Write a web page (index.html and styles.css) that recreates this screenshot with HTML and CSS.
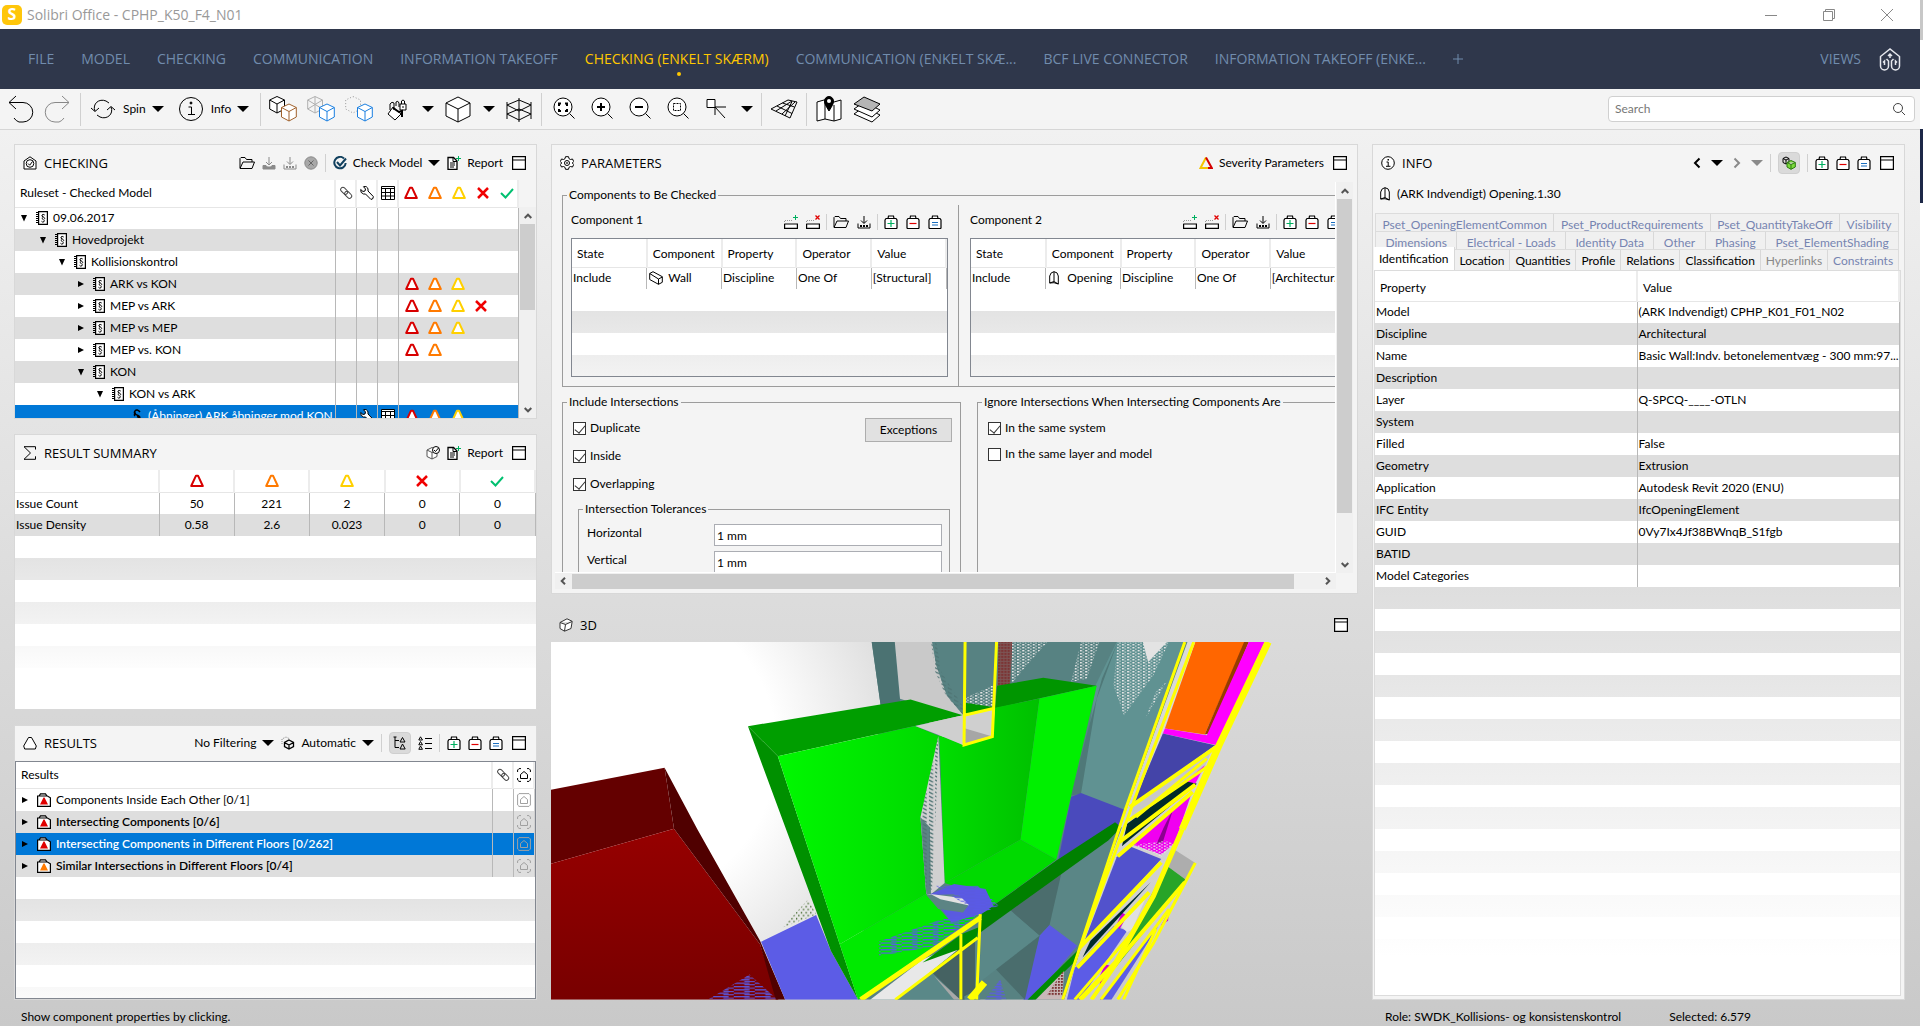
FILE: index.html
```html
<!DOCTYPE html>
<html lang="en">
<head>
<meta charset="utf-8">
<title>Solibri Office - CPHP_K50_F4_N01</title>
<link rel="stylesheet" href="styles.css">
</head>
<body>
<svg class="sprite" aria-hidden="true">
  <symbol id="i-undo" viewBox="0 0 28 28"><path d="M10 1 3 7.500 10 14M3 7.500h14a9.500 9.500 0 0 1 0 19.500h-4q-3-1-5-4"/></symbol>
  <symbol id="i-redo" viewBox="0 0 28 28"><path d="M18 1l7 6.500-7 6.500M25 7.500H11a9.500 9.500 0 0 0 0 19.500h4q3-1 5-4"/></symbol>
  <symbol id="i-spin" viewBox="0 0 28 28"><path d="M6 16C3 9 10 3 17 6l3 2M22 12c3 7-4 13-11 10l-3-2M2 13l4 3.500L10 13M18 15l4-3.500 4 3.500"/></symbol>
  <symbol id="i-info" viewBox="0 0 28 28"><circle cx="14" cy="14" r="11.500"/><path d="M11.500 12H14.500v7M11 19.500h7"/><circle cx="14" cy="8" r="1" fill="currentColor"/></symbol>
  <symbol id="i-infos" viewBox="0 0 14 14"><circle cx="7" cy="7" r="6.300" fill="#fff"/><path d="M5.500 6H7.200v4M5 10.300h4.500"/><path stroke-width="1.500" d="M6.500 3.700h1.500"/></symbol>
  <symbol id="i-cube" viewBox="0 0 28 28"><path fill="#fff" d="M14 2 26 8v13L14 27 2 21V8Z"/><path d="M2 8l12 6 12-6M14 14v13"/></symbol>
  <symbol id="i-cubes1" viewBox="0 0 28 28"><path fill="#fff" d="M8 1.500 15.500 5v9L8 18 .7 14V5Z"/><path d="M.7 5 8 9l7.500-4M8 9v9"/><g stroke="#a0612c"><path fill="#fff" d="M20 9l7.300 3.500v9.500L20 26l-7.500-4v-9.500Z"/><path d="m12.500 12.500 7.500 4 7.300-4M20 16.500V26"/></g></symbol>
  <symbol id="i-cubes2" viewBox="0 0 28 28"><g stroke="#b0b0b0"><path d="M8 1.500 15.500 5v9L8 18 .7 14V5ZM.7 5l15 9M15.500 5 .7 14M8 1.500V18"/></g><g stroke="#1a7fe0"><path fill="#fff" d="M20 9l7.300 3.500v9.500L20 26l-7.500-4v-9.500Z"/><path d="m12.500 12.500 7.500 4 7.300-4M20 16.500V26"/></g></symbol>
  <symbol id="i-cubes3" viewBox="0 0 28 28"><g stroke="#999" stroke-dasharray="1 2"><path d="M8 1.500 15.500 5v9L8 18 .7 14V5Z"/></g><g stroke="#1a7fe0"><path fill="#fff" d="M20 9l7.300 3.500v9.500L20 26l-7.500-4v-9.500Z"/><path d="m12.500 12.500 7.500 4 7.300-4M20 16.500V26"/></g></symbol>
  <symbol id="i-paint" viewBox="0 0 28 28"><path fill="#fff" d="M10 12l8 7-6 6-7-6Z"/><path d="M7 15V9q2-3 4-1v7M13 11V7q2-2 3 1v4"/><path fill="#fff" d="M17 9h6v6h-6ZM18.500 9V6q1.500-2 3 0v3M20 11v2"/><path stroke-width="2" d="M10 13l6 4 3-1v6"/></symbol>
  <symbol id="i-section" viewBox="0 0 28 28"><path d="M2 7v17M26 7v17M2 10l12 6 12-6M2 19l12 6 12-6M2 10l12-5 12 5M2 19l12-5 12 5M14 3v24"/></symbol>
  <symbol id="i-zall" viewBox="0 0 28 28"><path fill="#fff" d="M13 3a9 9 0 1 1 0 18a9 9 0 1 1 0-18"/><path d="m19.500 18.500 5 5"/><path stroke-width="2" d="M9 11V8.500h2M15 8.500h2V11M17 14v2h-2M11 16H9v-2"/></symbol>
  <symbol id="i-zin" viewBox="0 0 28 28"><path fill="#fff" d="M13 3a9 9 0 1 1 0 18a9 9 0 1 1 0-18"/><path d="m19.500 18.500 5 5"/><path stroke-width="2" d="M9 12h8M13 8v8"/></symbol>
  <symbol id="i-zout" viewBox="0 0 28 28"><path fill="#fff" d="M13 3a9 9 0 1 1 0 18a9 9 0 1 1 0-18"/><path d="m19.500 18.500 5 5"/><path stroke-width="2" d="M9 12h8"/></symbol>
  <symbol id="i-zbox" viewBox="0 0 28 28"><path fill="#fff" d="M13 3a9 9 0 1 1 0 18a9 9 0 1 1 0-18"/><path d="m19.500 18.500 5 5"/><path stroke-dasharray="2 1" d="M9.500 8.500h7v7h-7Z"/></symbol>
  <symbol id="i-pick" viewBox="0 0 28 28"><path fill="#fff" d="M5 4.500h8v8H5Z"/><path d="M13 20v-8h11M13 12l10 11"/></symbol>
  <symbol id="i-grid" viewBox="0 0 28 28"><path d="M1 14 18 5l9 2-7 16ZM7 11l15 7.500M12.500 8l12 4M6 16l16-10M12 19 25 7M22 6.500 15 21"/></symbol>
  <symbol id="i-map" viewBox="0 0 28 28"><path fill="#fff" d="M2 7l7-2 10 2 7-2v19l-7 2-9-2-8 2Z"/><path d="M10 7v17M19 10v16"/><path fill="currentColor" d="M14 16c-3-5-4.500-7-4.500-10a4.500 4.500 0 0 1 9 0c0 3-1.500 5-4.500 10Z"/><circle cx="14" cy="6" r="2" fill="#fff" stroke="none"/></symbol>
  <symbol id="i-layers" viewBox="0 0 28 28"><g fill="#fff"><path d="m11 12 16 8-8 7-18-8Z"/><path d="m11 7 16 8-8 7-18-8Z"/><path fill="#b5b5b5" d="m11 2 16 7-8 7L1 9Z"/></g></symbol>
  <symbol id="i-logo" viewBox="0 0 24 24"><path stroke-width="1.500" d="M2.500 19V9.500L12 2l9.500 7.500V19a4 4 0 0 1-8 0v-5l2-2M2.500 19a4 4 0 0 0 8 0v-5l-2-2M12 11V7M10 9l2-2 2 2M6.500 18v-4l-1.500 1.500M17.500 18v-4l1.500 1.500"/></symbol>
  <symbol id="i-search" viewBox="0 0 14 14"><circle cx="6" cy="6" r="4.500"/><path d="m9.500 9.500 3.500 3.500"/></symbol>
  <symbol id="i-caret" viewBox="0 0 12 6"><path fill="currentColor" stroke="none" d="M0 0h12L6 6Z"/></symbol>
  <symbol id="i-max" viewBox="0 0 14 14"><path fill="#fff" stroke-width="1.200" d="M.6.6h12.800v12.800H.6ZM.6 4h12.800"/></symbol>
  <symbol id="i-checking" viewBox="0 0 14 14"><path fill="#fff" d="M1 5 7 .8 13 5v8H1Z"/><circle cx="7" cy="7.500" r="3.800"/><path d="m5 7.500 1.700 1.700L9.500 5.500"/></symbol>
  <symbol id="i-folder" viewBox="0 0 16 14"><path d="M1 12V2.500L2 1.500h4l1.500 2H13V6M1 12.500 4 6h11.500L13 12.500Z"/></symbol>
  <symbol id="i-down" viewBox="0 0 14 14"><path d="M7 1v8M4 6l3 3 3-3"/><path fill="currentColor" d="M1 9.500h3l1.500 1.500h3L10 9.500h3v3.500H1Z"/></symbol>
  <symbol id="i-save" viewBox="0 0 14 14"><path d="M7 1v7M4 5.500l3 3 3-3M1 8.500v4.500h12V8.500"/><path stroke-width="2" stroke-dasharray="2 1" d="M3 11h8"/></symbol>
  <symbol id="i-stop" viewBox="0 0 14 14"><circle cx="7" cy="7" r="6.200" fill="#a8a8a8"/><path stroke="#666" d="m4.500 4.500 5 5M9.500 4.500l-5 5"/></symbol>
  <symbol id="i-docheck" viewBox="0 0 14 14"><path stroke="#11405e" stroke-width="2" d="M11 2.500A5.700 5.700 0 1 0 12.700 7M4 6l3 3.500 6-7"/></symbol>
  <symbol id="i-report" viewBox="0 0 14 14"><path fill="#fff" stroke-width="1.300" d="M1 1.500h5.500L10 5v8.300H1Z"/><path d="M6 2v3.500h4M3 7h5M3 9h5M3 11h4"/><path stroke="#00b060" d="M11.500 0v5M9 2.500h5"/></symbol>
  <symbol id="i-book" viewBox="0 0 12 14"><path fill="#fff" stroke-width="1.200" d="M2.600.6h8.800v12.800H2.600Z"/><path stroke-dasharray="1 1" stroke-width="3" d="M1.500 1v12"/><path d="M8.700 4Q7 2.800 6 4T8 6.300q1.300 1 .2 2M6.500 6.500Q5 7 7 8.300T8 10.700q-1.500 1-2.500-.4"/></symbol>
  <symbol id="i-rule" viewBox="0 0 12 14"><path stroke-width="1.500" d="M9 3Q6-.5 4 2t3 4.500q3 1.500 1 3M4 7Q2.500 5 5 4M3.500 11q3 3 5 .5T6 7.500"/></symbol>
  <symbol id="i-link" viewBox="0 0 14 14"><g stroke="#444"><rect x="1" y="2.500" width="8" height="4.500" rx="2.200" transform="rotate(45 5 5)"/><rect x="5" y="6.500" width="8" height="4.500" rx="2.200" transform="rotate(45 9 9)"/></g></symbol>
  <symbol id="i-wrench" viewBox="0 0 14 14"><path fill="#fff" d="M.7 3.500 3 5.500l2-.5.500-2L3.500.7Q7-.3 8 3v2l5.300 5.500q.5 2.500-2.300 3L5.500 8H3.500Q.2 7 .7 3.500Z"/></symbol>
  <symbol id="i-table" viewBox="0 0 14 14"><path fill="#fff" d="M.5.5h13v13H.5Z"/><path d="M1 2.500h12M1 6.500h12M1 10h12M4.500 3v10M9.500 3v10"/></symbol>
  <symbol id="i-tri" viewBox="0 0 14 14"><path fill="#fff" stroke-width="2" stroke-linejoin="round" d="M6 1.700h2l4.800 10.300H1.200Z"/></symbol>
  <symbol id="i-sev" viewBox="0 0 14 14"><path stroke="#f4c400" stroke-width="2" d="M7 1.500 1.500 12H10"/><path stroke="#d40000" stroke-width="2" d="M7 1.500 12.800 12H9"/></symbol>
  <symbol id="i-results" viewBox="0 0 14 14"><path fill="#fff" stroke-linejoin="round" d="M5.500 1.500h3l4.800 8.500-1 3H1.700l-1-3Z"/></symbol>
  <symbol id="i-x" viewBox="0 0 14 14"><path stroke="#f00000" stroke-width="2.500" d="m2 2 10 10M12 2 2 12"/></symbol>
  <symbol id="i-ok" viewBox="0 0 14 14"><path stroke="#00c070" stroke-width="2" d="m1 7 4.500 4.500L13 3"/></symbol>
  <symbol id="i-sigma" viewBox="0 0 14 14"><path d="M12.500 3.500V.7H1L7.500 7 1 13.300h11.500v-3"/></symbol>
  <symbol id="i-cubecheck" viewBox="0 0 14 14"><path fill="#fff" stroke="#555" d="M1 4 6 1.500 11 4v6.500L6 13 1 10.500ZM1 4l5 2.500L10 5M6 6.500V13"/><circle cx="10" cy="4" r="3.500" fill="#fff"/><path d="m8 4 1.500 1.500L12.500 2"/></symbol>
  <symbol id="i-auto" viewBox="0 0 14 14"><path stroke="#888" stroke-dasharray="1 1" d="M1 8V3l4-2 4 2"/><path stroke-width="1.300" d="M8 4l4.500 2.500v4L8 13l-4.500-2.500v-4ZM3.500 6.500 8 9l4.500-2.500M8 9v4"/></symbol>
  <symbol id="i-tree" viewBox="0 0 14 14"><path d="M2 1v10.500h4M2 4.500h4M.5 1h3M9.500 1.500 12 6H7ZM9.500 8l2.700 5H7Z"/></symbol>
  <symbol id="i-list" viewBox="0 0 14 14"><path d="M2.500.8 4.500 4H.8ZM2.500 5.500l2 3.300H.8ZM2.500 10l2 3.300H.8ZM7 2.500h7M7 7.500h7M7 12.500h7"/></symbol>
  <symbol id="i-bagadd" viewBox="0 0 14 14"><path fill="#fff" stroke-width="1.200" d="M4 3.500 4.500 1h5L10 3.500M1 5l1-1.500h10L13 5v8l-.5.500h-11L1 13Z"/><path stroke="#00b060" stroke-width="1.200" d="M3.500 8.500h7M7 5v7"/></symbol>
  <symbol id="i-bagdel" viewBox="0 0 14 14"><path fill="#fff" stroke-width="1.200" d="M4 3.500 4.500 1h5L10 3.500M1 5l1-1.500h10L13 5v8l-.5.500h-11L1 13Z"/><path stroke="#e00000" stroke-width="1.200" d="M3.500 8.500h7"/></symbol>
  <symbol id="i-bageq" viewBox="0 0 14 14"><path fill="#fff" stroke-width="1.200" d="M4 3.500 4.500 1h5L10 3.500M1 5l1-1.500h10L13 5v8l-.5.500h-11L1 13Z"/><path stroke="#1a6fc0" stroke-width="1.200" d="M4 7.500h6M4 10h6"/></symbol>
  <symbol id="i-case" viewBox="0 0 14 14"><path fill="#fff" stroke-width="1.200" d="M2 3 3.500.8h5L10 3M.6 3h9.800l3 1.800v8.600H.6Z"/><path stroke="none" fill="var(--sev)" d="M6.500 4.500h1L11 11.500H3Z"/></symbol>
  <symbol id="i-frame" viewBox="0 0 14 14"><path d="M4 .6H2L.6 2v2M10 .6h2L13.400 2v2M4 13.400H2L.6 12v-2M10 13.400h2l1.400-1.400v-2M3.500 6.500 7 3.500l3.500 3v4h-7Z"/></symbol>
  <symbol id="i-framebox" viewBox="0 0 14 14"><path d="M2 .6h10L13.400 2v10L12 13.400H2L.6 12V2ZM3.500 6.500 7 3.500l3.500 3v4h-7Z"/></symbol>
  <symbol id="i-gear" viewBox="0 0 14 14"><path fill="#fff" stroke-linejoin="round" d="M5.500.7h3l.5 2 1.500.8 2-.5 1.200 2.500L12.300 7l1.400 1.500-1.200 2.500-2-.5-1.500.8-.5 2h-3l-.5-2-1.500-.8-2 .5L.3 8.500 1.700 7 .3 5.500 1.500 3l2 .5L5 2.700Z"/><circle cx="7" cy="7" r="2.500"/><circle cx="7" cy="7" r=".5"/></symbol>
  <symbol id="i-rowadd" viewBox="0 0 14 14"><path fill="#fff" stroke-width="1.200" d="M.6 9h12.800v4.400H.6Z"/><path stroke="#999" stroke-dasharray="1 1" d="M.5 9V5.500H9"/><path stroke="#00b060" d="M11.500 0v5M9 2.500h5"/></symbol>
  <symbol id="i-rowdel" viewBox="0 0 14 14"><path fill="#fff" stroke-width="1.200" d="M.6 9h12.800v4.400H.6Z"/><path stroke="#999" stroke-dasharray="1 1" d="M.5 9V5.500H9"/><path stroke="#e00000" stroke-width="1.300" d="m9.500.5 4 4M13.500.5l-4 4"/></symbol>
  <symbol id="i-wall" viewBox="0 0 14 14"><path fill="#fff" d="M.7 2.500 4 .7l9.300 5v5.600L9.500 13.300.7 8.500Z"/><path d="M.7 2.500 9.500 8l3.800-2M9.500 8v5.300"/></symbol>
  <symbol id="i-open" viewBox="0 0 14 14"><path fill="#fff" d="M1.700 12V5Q2.500 1 6 .7q4 .3 4.300 4.300v8L6 11.700Z"/><path d="M6 .7v9.800l4.300 2.500M1.700 12 6 10.500"/></symbol>
  <symbol id="i-3d" viewBox="0 0 14 14"><path fill="#fff" stroke="#333" d="M1 4.500 8 .8l5.200 2.500L12 10.500 5.500 13.200 1 10.500ZM1 4.500l5.500 2 6.500-3M6.500 6.500 5.500 13"/></symbol>
  <symbol id="i-greens" viewBox="0 0 14 14"><path d="M4 1l3 1.500v4L4 8 1 6.500v-4ZM1 2.500 4 4l3-1.500M4 4v4"/><path fill="#7cdc3c" stroke="#2c7a10" d="m9 4.500 4.300 2v4.500L9 13.300l-4-2.300V6.500ZM5 6.500l4 2 4.300-2M9 8.500v4.800"/></symbol>
  <symbol id="i-prev" viewBox="0 0 14 14"><path stroke-width="2" d="M9.500 2.500 5 7l4.500 4.500"/></symbol>
  <symbol id="i-next" viewBox="0 0 14 14"><path stroke-width="2" d="M4.500 2.500 9 7l-4.500 4.500"/></symbol>
  <symbol id="i-right" viewBox="0 0 8 8"><path fill="currentColor" stroke="none" d="M1 1l6 3-6 3Z"/></symbol>
  <symbol id="i-open-arrow" viewBox="0 0 8 8"><path fill="currentColor" stroke="none" d="M1 1h6L4 7.500Z"/></symbol>
  <symbol id="i-up" viewBox="0 0 8 8"><path stroke-width="2" d="M.7 6 4 2.700 7.300 6"/></symbol>
  <symbol id="i-dn" viewBox="0 0 8 8"><path stroke-width="2" d="M.7 2 4 5.300 7.300 2"/></symbol>
  <symbol id="i-lt" viewBox="0 0 8 8"><path stroke-width="2" d="M6 .7 2.700 4 6 7.300"/></symbol>
  <symbol id="i-rt" viewBox="0 0 8 8"><path stroke-width="2" d="M2 .7 5.300 4 2 7.300"/></symbol>
</svg>

<div class="window">
<div class="app">
  <header class="titlebar">
    <span class="app-badge">S</span>
    <h1>Solibri Office - CPHP_K50_F4_N01</h1>
    <div class="window-buttons">
      <button aria-label="Minimize"><svg viewBox="0 0 12 12"><path d="M0 6.500h12"/></svg></button>
      <button aria-label="Restore"><svg viewBox="0 0 12 12"><path d="M.5 2.500h9v9h-9ZM2.500 2.500v-2h9v9h-2"/></svg></button>
      <button aria-label="Close"><svg viewBox="0 0 12 12"><path d="m0 0 12 12M12 0 0 12"/></svg></button>
    </div>
  </header>

  <nav class="menu">
    <a href="#">FILE</a><a href="#">MODEL</a><a href="#">CHECKING</a><a href="#">COMMUNICATION</a><a href="#">INFORMATION TAKEOFF</a><a href="#" class="current">CHECKING (ENKELT SKÆRM)</a><a href="#">COMMUNICATION (ENKELT SKÆ...</a><a href="#">BCF LIVE CONNECTOR</a><a href="#">INFORMATION TAKEOFF (ENKE...</a><a href="#" class="add" aria-label="Add view"><svg viewBox="0 0 10 10"><path d="M0 5h10M5 0v10"/></svg></a>
    <a href="#" class="views">VIEWS</a>
    <svg class="brand"><use href="#i-logo"/></svg>
  </nav>

  <div class="toolbar">
    <button class="tool" aria-label="Undo"><svg><use href="#i-undo"/></svg></button>
    <button class="tool off" aria-label="Redo"><svg><use href="#i-redo"/></svg></button>
    <i class="sep"></i>
    <button class="tool wide"><svg><use href="#i-spin"/></svg><span>Spin</span><svg class="caret"><use href="#i-caret"/></svg></button>
    <button class="tool wide"><svg><use href="#i-info"/></svg><span>Info</span><svg class="caret"><use href="#i-caret"/></svg></button>
    <i class="sep"></i>
    <button class="tool" aria-label="Show related"><svg><use href="#i-cubes1"/></svg></button>
    <button class="tool" aria-label="Transparent"><svg><use href="#i-cubes2"/></svg></button>
    <button class="tool" aria-label="Hide others"><svg><use href="#i-cubes3"/></svg></button>
    <button class="tool" aria-label="Lock colour"><svg><use href="#i-paint"/></svg></button>
    <button class="drop" aria-label="Colour options"><svg class="caret"><use href="#i-caret"/></svg></button>
    <button class="tool" aria-label="View cube"><svg><use href="#i-cube"/></svg></button>
    <button class="drop" aria-label="Cube options"><svg class="caret"><use href="#i-caret"/></svg></button>
    <button class="tool" aria-label="Section box"><svg><use href="#i-section"/></svg></button>
    <i class="sep"></i>
    <button class="tool" aria-label="Zoom all"><svg><use href="#i-zall"/></svg></button>
    <button class="tool" aria-label="Zoom in"><svg><use href="#i-zin"/></svg></button>
    <button class="tool" aria-label="Zoom out"><svg><use href="#i-zout"/></svg></button>
    <button class="tool" aria-label="Zoom to selection"><svg><use href="#i-zbox"/></svg></button>
    <button class="tool" aria-label="Pick"><svg><use href="#i-pick"/></svg></button>
    <button class="drop" aria-label="Pick options"><svg class="caret"><use href="#i-caret"/></svg></button>
    <i class="sep"></i>
    <button class="tool" aria-label="Grid"><svg><use href="#i-grid"/></svg></button>
    <i class="sep"></i>
    <button class="tool" aria-label="Map"><svg><use href="#i-map"/></svg></button>
    <button class="tool" aria-label="Layers"><svg><use href="#i-layers"/></svg></button>
    <label class="search"><input type="text" placeholder="Search" aria-label="Search"><svg><use href="#i-search"/></svg></label>
  </div>

  <main class="workspace">
    <div class="left">
      <section class="panel">
        <header class="panel-head">
          <svg><use href="#i-checking"/></svg><h2>CHECKING</h2>
          <button aria-label="Open"><svg class="w16"><use href="#i-folder"/></svg></button>
          <button class="off" aria-label="Save"><svg><use href="#i-down"/></svg></button>
          <button class="off" aria-label="Save as"><svg><use href="#i-save"/></svg></button>
          <button class="off" aria-label="Stop"><svg><use href="#i-stop"/></svg></button>
          <i class="sep"></i>
          <button><svg><use href="#i-docheck"/></svg><span>Check Model</span><svg class="caret"><use href="#i-caret"/></svg></button>
          <button><svg><use href="#i-report"/></svg><span>Report</span></button>
          <button aria-label="Maximize"><svg><use href="#i-max"/></svg></button>
        </header>
        <div class="scroller">
          <table class="tree">
            <colgroup><col><col class="c21"><col class="c21"><col class="c21"><col class="c120"></colgroup>
            <thead><tr><th class="lead">Ruleset - Checked Model</th><th><svg><use href="#i-link"/></svg></th><th><svg><use href="#i-wrench"/></svg></th><th><svg><use href="#i-table"/></svg></th><th><div class="sev head"><svg class="red"><use href="#i-tri"/></svg><svg class="orange"><use href="#i-tri"/></svg><svg class="yellow"><use href="#i-tri"/></svg><svg><use href="#i-x"/></svg><svg><use href="#i-ok"/></svg></div></th></tr></thead>
            <tbody>
              <tr><td><div class="node l0"><svg class="tw"><use href="#i-open-arrow"/></svg><svg class="bk"><use href="#i-book"/></svg>09.06.2017</div></td><td></td><td></td><td></td><td></td></tr>
              <tr><td><div class="node l1"><svg class="tw"><use href="#i-open-arrow"/></svg><svg class="bk"><use href="#i-book"/></svg>Hovedprojekt</div></td><td></td><td></td><td></td><td></td></tr>
              <tr><td><div class="node l2"><svg class="tw"><use href="#i-open-arrow"/></svg><svg class="bk"><use href="#i-book"/></svg>Kollisionskontrol</div></td><td></td><td></td><td></td><td></td></tr>
              <tr><td><div class="node l3"><svg class="tw"><use href="#i-right"/></svg><svg class="bk"><use href="#i-book"/></svg>ARK vs KON</div></td><td></td><td></td><td></td><td><div class="sev"><svg class="red"><use href="#i-tri"/></svg><svg class="orange"><use href="#i-tri"/></svg><svg class="yellow"><use href="#i-tri"/></svg></div></td></tr>
              <tr><td><div class="node l3"><svg class="tw"><use href="#i-right"/></svg><svg class="bk"><use href="#i-book"/></svg>MEP vs ARK</div></td><td></td><td></td><td></td><td><div class="sev"><svg class="red"><use href="#i-tri"/></svg><svg class="orange"><use href="#i-tri"/></svg><svg class="yellow"><use href="#i-tri"/></svg><svg><use href="#i-x"/></svg></div></td></tr>
              <tr><td><div class="node l3"><svg class="tw"><use href="#i-right"/></svg><svg class="bk"><use href="#i-book"/></svg>MEP vs MEP</div></td><td></td><td></td><td></td><td><div class="sev"><svg class="red"><use href="#i-tri"/></svg><svg class="orange"><use href="#i-tri"/></svg><svg class="yellow"><use href="#i-tri"/></svg></div></td></tr>
              <tr><td><div class="node l3"><svg class="tw"><use href="#i-right"/></svg><svg class="bk"><use href="#i-book"/></svg>MEP vs. KON</div></td><td></td><td></td><td></td><td><div class="sev"><svg class="red"><use href="#i-tri"/></svg><svg class="orange"><use href="#i-tri"/></svg></div></td></tr>
              <tr><td><div class="node l3"><svg class="tw"><use href="#i-open-arrow"/></svg><svg class="bk"><use href="#i-book"/></svg>KON</div></td><td></td><td></td><td></td><td></td></tr>
              <tr><td><div class="node l4"><svg class="tw"><use href="#i-open-arrow"/></svg><svg class="bk"><use href="#i-book"/></svg>KON vs ARK</div></td><td></td><td></td><td></td><td></td></tr>
              <tr class="selected"><td><div class="node l5"><svg class="tw"></svg><svg class="bk"><use href="#i-rule"/></svg>(Åbninger) ARK åbninger mod KON</div></td><td></td><td><svg><use href="#i-wrench"/></svg></td><td><svg><use href="#i-table"/></svg></td><td><div class="sev"><svg class="red"><use href="#i-tri"/></svg><svg class="orange"><use href="#i-tri"/></svg><svg class="yellow"><use href="#i-tri"/></svg></div></td></tr>
            </tbody>
          </table>
          <div class="vbar below-head"><svg><use href="#i-up"/></svg><i class="thumb tree-thumb"></i><svg class="end"><use href="#i-dn"/></svg></div>
        </div>
      </section>

      <section class="panel">
        <header class="panel-head">
          <svg><use href="#i-sigma"/></svg><h2>RESULT SUMMARY</h2>
          <button aria-label="Check"><svg><use href="#i-cubecheck"/></svg></button>
          <button><svg><use href="#i-report"/></svg><span>Report</span></button>
          <button aria-label="Maximize"><svg><use href="#i-max"/></svg></button>
        </header>
        <div class="zebra">
          <table class="summary">
            <colgroup><col class="c144"><col><col><col><col><col></colgroup>
            <thead><tr><th></th><th><svg class="red"><use href="#i-tri"/></svg></th><th><svg class="orange"><use href="#i-tri"/></svg></th><th><svg class="yellow"><use href="#i-tri"/></svg></th><th><svg><use href="#i-x"/></svg></th><th><svg><use href="#i-ok"/></svg></th></tr></thead>
            <tbody>
              <tr><td>Issue Count</td><td>50</td><td>221</td><td>2</td><td>0</td><td>0</td></tr>
              <tr><td>Issue Density</td><td>0.58</td><td>2.6</td><td>0.023</td><td>0</td><td>0</td></tr>
            </tbody>
          </table>
          <div class="stripes"></div>
        </div>
      </section>

      <section class="panel">
        <header class="panel-head">
          <svg><use href="#i-results"/></svg><h2>RESULTS</h2>
          <button><span>No Filtering</span><svg class="caret"><use href="#i-caret"/></svg></button>
          <button><svg><use href="#i-auto"/></svg><span>Automatic</span><svg class="caret"><use href="#i-caret"/></svg></button>
          <i class="sep"></i>
          <button class="pressed" aria-label="Tree"><svg><use href="#i-tree"/></svg></button>
          <button aria-label="List"><svg><use href="#i-list"/></svg></button>
          <i class="sep"></i>
          <button aria-label="Add"><svg><use href="#i-bagadd"/></svg></button>
          <button aria-label="Remove"><svg><use href="#i-bagdel"/></svg></button>
          <button aria-label="Set"><svg><use href="#i-bageq"/></svg></button>
          <button aria-label="Maximize"><svg><use href="#i-max"/></svg></button>
        </header>
        <div class="zebra framed">
          <table class="results">
            <colgroup><col><col class="c21"><col class="c21"></colgroup>
            <thead><tr><th class="lead">Results</th><th><svg><use href="#i-link"/></svg></th><th><svg><use href="#i-frame"/></svg></th></tr></thead>
            <tbody>
              <tr><td><div class="node l0 s-red"><svg class="tw"><use href="#i-right"/></svg><svg><use href="#i-case"/></svg>Components Inside Each Other [0/1]</div></td><td></td><td class="dim"><svg><use href="#i-framebox"/></svg></td></tr>
              <tr class="unseen"><td><div class="node l0 s-red"><svg class="tw"><use href="#i-right"/></svg><svg><use href="#i-case"/></svg>Intersecting Components [0/6]</div></td><td></td><td class="dim"><svg><use href="#i-frame"/></svg></td></tr>
              <tr class="unseen selected"><td><div class="node l0 s-red"><svg class="tw"><use href="#i-right"/></svg><svg><use href="#i-case"/></svg>Intersecting Components in Different Floors [0/262]</div></td><td></td><td class="dim"><svg><use href="#i-framebox"/></svg></td></tr>
              <tr class="unseen"><td><div class="node l0 s-orange"><svg class="tw"><use href="#i-right"/></svg><svg><use href="#i-case"/></svg>Similar Intersections in Different Floors [0/4]</div></td><td></td><td class="dim"><svg><use href="#i-frame"/></svg></td></tr>
            </tbody>
          </table>
          <div class="stripes"></div>
        </div>
      </section>
    </div>

    <div class="middle">
      <section class="panel params">
        <header class="panel-head">
          <svg><use href="#i-gear"/></svg><h2>PARAMETERS</h2>
          <button><svg><use href="#i-sev"/></svg><span>Severity Parameters</span></button>
          <button aria-label="Maximize"><svg><use href="#i-max"/></svg></button>
        </header>
        <div class="param-scroll">
          <div class="param-view">
            <fieldset class="group components">
              <legend>Components to Be Checked</legend>
              <div class="component">
                <div class="component-head"><h3>Component 1</h3>
                  <button aria-label="Add row"><svg><use href="#i-rowadd"/></svg></button><button aria-label="Delete row"><svg><use href="#i-rowdel"/></svg></button><i class="sep"></i><button aria-label="Open"><svg class="w16"><use href="#i-folder"/></svg></button><button aria-label="Save"><svg><use href="#i-save"/></svg></button><i class="sep"></i><button aria-label="Add"><svg><use href="#i-bagadd"/></svg></button><button aria-label="Remove"><svg><use href="#i-bagdel"/></svg></button><button aria-label="Set"><svg><use href="#i-bageq"/></svg></button>
                </div>
                <div class="zebra framed short">
                  <table class="filter">
                    <thead><tr><th>State</th><th>Component</th><th>Property</th><th>Operator</th><th>Value</th></tr></thead>
                    <tbody><tr><td>Include</td><td><span class="with-icon"><svg><use href="#i-wall"/></svg>Wall</span></td><td>Discipline</td><td>One Of</td><td>[Structural]</td></tr></tbody>
                  </table>
                  <div class="stripes"></div>
                </div>
              </div>
              <div class="component">
                <div class="component-head"><h3>Component 2</h3>
                  <button aria-label="Add row"><svg><use href="#i-rowadd"/></svg></button><button aria-label="Delete row"><svg><use href="#i-rowdel"/></svg></button><i class="sep"></i><button aria-label="Open"><svg class="w16"><use href="#i-folder"/></svg></button><button aria-label="Save"><svg><use href="#i-save"/></svg></button><i class="sep"></i><button aria-label="Add"><svg><use href="#i-bagadd"/></svg></button><button aria-label="Remove"><svg><use href="#i-bagdel"/></svg></button><button aria-label="Set"><svg><use href="#i-bageq"/></svg></button>
                </div>
                <div class="zebra framed short">
                  <table class="filter">
                    <thead><tr><th>State</th><th>Component</th><th>Property</th><th>Operator</th><th>Value</th></tr></thead>
                    <tbody><tr><td>Include</td><td><span class="with-icon"><svg><use href="#i-open"/></svg>Opening</span></td><td>Discipline</td><td>One Of</td><td>[Architectur...</td></tr></tbody>
                  </table>
                  <div class="stripes"></div>
                </div>
              </div>
            </fieldset>
            <div class="pair">
              <fieldset class="group">
                <legend>Include Intersections</legend>
                <div class="split">
                  <div class="checks loose">
                    <label><input type="checkbox" checked>Duplicate</label>
                    <label><input type="checkbox" checked>Inside</label>
                    <label><input type="checkbox" checked>Overlapping</label>
                  </div>
                  <button class="plain">Exceptions</button>
                </div>
                <fieldset class="group tolerances">
                  <legend>Intersection Tolerances</legend>
                  <label>Horizontal<input type="text" value="1 mm"></label>
                  <label>Vertical<input type="text" value="1 mm"></label>
                </fieldset>
              </fieldset>
              <fieldset class="group">
                <legend>Ignore Intersections When Intersecting Components Are</legend>
                <div class="checks">
                  <label><input type="checkbox" checked>In the same system</label>
                  <label><input type="checkbox">In the same layer and model</label>
                </div>
              </fieldset>
            </div>
          </div>
          <div class="vbar"><svg><use href="#i-up"/></svg><i class="thumb param-thumb"></i><svg class="end"><use href="#i-dn"/></svg></div>
          <div class="hbar"><svg><use href="#i-lt"/></svg><i class="thumb"></i><svg class="end"><use href="#i-rt"/></svg></div>
        </div>
      </section>

      <section class="view3d">
        <header class="panel-head">
          <svg><use href="#i-3d"/></svg><h2>3D</h2>
          <button aria-label="Maximize"><svg><use href="#i-max"/></svg></button>
        </header>
        <svg class="scene" viewBox="0 0 807 357" preserveAspectRatio="xMinYMin slice" role="img" aria-label="3D model view">
          <defs>
            <radialGradient id="sky" cx=".2" cy=".3" r=".85"><stop offset=".5" stop-color="#fff"/><stop offset="1" stop-color="#d6d6d6"/></radialGradient>
            <linearGradient id="greenL"><stop offset="0" stop-color="#00f800"/><stop offset="1" stop-color="#00d800"/></linearGradient>
            <linearGradient id="greenM"><stop offset="0" stop-color="#00de00"/><stop offset="1" stop-color="#00c000"/></linearGradient>
            <linearGradient id="redF" x2="0" y2="1"><stop offset="0" stop-color="#960000"/><stop offset="1" stop-color="#780000"/></linearGradient>
            <pattern id="dotW" width="10" height="9" patternUnits="userSpaceOnUse"><path fill="#e6e6e6" d="M0 0h4v4H0ZM5 5h3v3H5Z"/></pattern>
            <pattern id="dotT" width="12" height="12" patternUnits="userSpaceOnUse"><path fill="#4f7474" d="M0 0l8 6v4L0 4Z"/></pattern>
            <pattern id="dotG" width="9" height="18" patternUnits="userSpaceOnUse"><path fill="#376020" d="M2 0h2v6H2ZM6 9h2v5H6Z"/></pattern>
            <pattern id="lineB" width="40" height="10" patternUnits="userSpaceOnUse"><path fill="#5a5ae6" d="M0 0h30v4H0ZM20 5h20v3H20Z"/></pattern>
            <pattern id="dotR" width="6" height="9" patternUnits="userSpaceOnUse"><path fill="#7c3434" d="M0 0h4v6H0Z"/></pattern>
            <clipPath id="port"><path d="M11 21H1554V1091H11Z"/></clipPath>
          </defs>
          <g transform="translate(-6 -7) scale(.523 .3333)" clip-path="url(#port)">
            <path fill="url(#sky)" d="M11 21H700V1091H11Z"/>
            <path fill="#578282" d="M623 21H1225L1100 560 990 1091H597L640 210Z"/>
            <path fill="#4b7272" d="M623 21h44l10 180-37 10Z"/>
            <path fill="#c9c9c9" d="M667 21h71l8 70 20 90 32 60-40 70-60-110-21-10Z"/>
            <path fill="url(#dotT)" d="M736 21h10l10 90 24 60 18 45v24l-34-60-20-70Z"/>
            <path fill="url(#dotW)" d="M800 190l55-40v70l-55 18Z"/>
            <path fill="#7c5656" d="M865 21h26l-4 128-24 4Z"/><path fill="url(#dotR)" d="M865 21h26l-4 128-24 4Z"/>
            <path fill="url(#dotW)" d="M890 21h68l-40 70-28 55ZM1022 21h35l-24 110-30 10Z"/>
            <path fill="#609292" d="M1090 21h130L1105 525l-85-50 30-325Z"/>
            <path fill="#4f7878" d="M1062 130l30-109-40 170-30 284-20 5Z"/>
            <path fill="url(#dotW)" d="M1092 21h98l-30 100-56 120-20-90ZM1165 170l20-30-40 110Z"/>
            <path fill="#e3e3e3" d="M1140 21h46l-36 60Z"/>

            <path fill="#4a4abc" d="M1022 473l83 50-10 50-120 130 28-218Z"/>
            <path fill="#5a8686" d="M985 700l115-125-85 360-53-67Z"/>
            <path fill="#4b6d6d" d="M880 815l105-105-23 158-19 32Z"/>
            <path fill="#5a5ae2" d="M962 868l53 62-85 161h-18l31-191Z"/>
            <path fill="#5a8888" d="M832 888l55-65 56 77-115 140Z"/>
            <path fill="#4a6d6d" d="M943 900l-28 191-55-90Z"/>
            <path fill="#008c00" d="M1015 945v25l-80 121h-15Z"/>
            <path fill="#c8b8b8" d="M990 1005l-4 86h-50Z"/><path fill="url(#dotR)" d="M990 1000l-4 80h-30Z"/>

            <path fill="#640000" d="M11 463l217-66 18 183L11 685Z"/>
            <path fill="url(#redF)" d="M11 685l235-105 164 345 35 166H11Z"/>
            <path fill="#500000" d="M228 397l62 183 120 335 48 176h-18L410 925 246 580Z"/>
            <path fill="#5c5ce6" d="M412 918l105-80 28 107 52 146H458Z"/>
            <path fill="url(#lineB)" d="M310 1091l80-75 50 70v5Z"/>
            <path fill="url(#dotG)" d="M452 876l50-85 15 45Z"/>

            <path fill="#009e00" d="M387 273l310-80 100 47-353 123Z"/>
            <path fill="#009000" d="M387 273l57 90 118 562 35 166-52-146-48-205Z"/>
            <path fill="url(#greenL)" d="M444 363l262-91 48 32-38 240 11 231-165 150Z"/>
            <path fill="#00ea00" d="M562 925l165-150 48 85 57-30-235 261Z"/>
            <path fill="#009600" d="M798 202l60 14 4-64 88-24 102 24-254 88Z"/>
            <path fill="url(#greenM)" d="M752 300l48 30 53-27 5-85 85-28-36 422-145 130Z"/>
            <path fill="#00f000" d="M943 190l109-38-77 520-68-60Z"/>
            <path fill="#00da00" d="M907 612l68 60-143 163-5-60-65-33Z"/>
            <path fill="#008000" d="M832 835l143-160 112-115 12 15-25 40-244 275Z"/>
            <path fill="#cfcfcf" d="M706 272l91-32 61-23-5 86-55 27-46-30Z"/>
            <path fill="#a6a6a6" d="M798 278l52 24-52 26Z"/>
            <path fill="#d0d0d0" d="M750 302l12 440-27 35-8-2-11-230Z"/>
            <path fill="#5c8484" d="M716 545l18 30 2 200-9 0Z"/><path fill="url(#dotT)" d="M750 302l-4 200-8 260-12-10-10-207Z"/>
            <path fill="#5a5ae0" d="M735 775l45-30 60 15 15 50-23 25-57 25Z"/>
            <path fill="#5c8484" d="M727 778l60-2 20 34-10 20-47-10Z"/>
            <path fill="#e2e2e2" d="M735 775l60 12 14 22-55-18Z"/>
            <path fill="url(#lineB)" d="M765 845l60-10-60 90-128 36v-44Z"/>
            <path fill="url(#lineB)" d="M745 750h80l40 60-35 25Z"/>

            <path fill="#e8e8e8" d="M620 1091l100-120 95-65-145 185Z"/>
            <path fill="#5a8888" d="M672 1091l120-155 34-45 4 200Z"/>
            <path fill="#456262" d="M740 1013l50-75 10 153h-8Z"/>
            <path fill="#008c00" d="M720 980l75-85 31-20-2 35-34 30Z"/>
            <path fill="#a8a8a8" d="M742 1020l50 71h-12Z"/>
            <path fill="#456262" d="M795 940l25-25v150l-25 20Z"/>
            <path fill="url(#lineB)" d="M838 1091l30-60 12 60Z"/>

            <path fill="#f60" d="M1240 21h95l-77 277-76-18Z"/>
            <path fill="#963c00" d="M1333 21h9l-72 272-12 5Z"/>
            <path fill="#f0f" d="M1342 21h30l-90 309-104-35 4-15 80 20Z"/>
            <path fill="#4444a8" d="M1178 295l100 35-158 180Z"/>
            <path fill="#c8c8c8" d="M1270 350l-12 45-140 165 2-50Z"/>
            <path fill="#f0f" d="M1258 390l-18 55-20-5Z"/>
            <path fill="#002a2a" d="M1222 438l21 7-143 187 10-67Z"/>
            <path fill="#f000f0" d="M1233 472l-32 150-26 35-53-29Z"/>
            <path fill="#8c0090" d="M1198 520l-20 100-12 5 14-50Z"/>
            <path fill="url(#dotW)" d="M1122 628l60-12 18 8-25 40Z"/>
            <path fill="#5252cc" d="M1115 632l60 38-150 260 65-265Z"/>
            <path fill="#adadad" d="M1200 642l40 40-18 50-37-42Z"/>
            <path fill="#28a428" d="M1185 690l37 42-135 265 33-110Z"/>
            <path fill="#5c5ce6" d="M1085 870l25 15-90 206h-25l15-95Z"/>
            <path fill="#e0e0e0" d="M1150 770l-30 110-10 10-15-25Z"/>
            <path fill="#d000d0" d="M1100 830l10 10-14 40-8-6ZM1068 985l10 5-20 60v-30ZM1190 825l-16 45 14-15Z"/>
            <path fill="#002a2a" d="M1155 740l-130 225 15-50Z"/>
            <path fill="#5c5ce6" d="M1170 870l-90 221h-22Z"/>
            <g class="edges" fill="none" stroke="#ff0">
              <path stroke-width="3" d="M801 21l-2 308 54-25 8-283M799 240l56-20"/>
              <path stroke-width="3" d="M1220 21l-113 500-120 570M1237 21l-108 450-110 470"/>
              <path stroke-width="7" d="M1379 21l-94 310-70 250"/>
              <path stroke-width="5" d="M1215 581l-55 200-72 200-68 110"/>
              <path stroke-width="4" d="M1280 335 1115 515M1240 448 1095 620M1235 470 1092 662"/>
              <path stroke-width="3" d="M1262 395l-150 160M1262 370l-135 175"/>
              <path stroke-width="4" d="M1175 680 1020 935M1152 770 1015 995"/>
              <path stroke-width="3" d="M1240 682l-20 60-60 180-68 169"/>
              <path stroke-width="4" d="M1220 740l-120 220-58 131"/>
              <path stroke-width="3" d="M1190 820l-130 271M1120 890l-110 201M1165 880l-62 211"/>
              <path stroke-width="5" d="M602 1091l228-245"/>
              <path stroke-width="3" d="M830 835l-7 256M793 895v196M668 1091l157-185"/>
              <path stroke-width="7" d="M838 1040l-28 51"/>
            </g>
          </g>
        </svg>
      </section>
    </div>

    <section class="panel info">
      <header class="panel-head">
        <svg><use href="#i-infos"/></svg><h2>INFO</h2>
        <button aria-label="Back"><svg><use href="#i-prev"/></svg></button>
        <button aria-label="Back history"><svg class="caret"><use href="#i-caret"/></svg></button>
        <button class="off" aria-label="Forward"><svg><use href="#i-next"/></svg></button>
        <button class="off" aria-label="Forward history"><svg class="caret"><use href="#i-caret"/></svg></button>
        <i class="sep"></i>
        <button class="pressed" aria-label="Follow selection"><svg><use href="#i-greens"/></svg></button>
        <i class="sep"></i>
        <button aria-label="Add"><svg><use href="#i-bagadd"/></svg></button>
        <button aria-label="Remove"><svg><use href="#i-bagdel"/></svg></button>
        <button aria-label="Set"><svg><use href="#i-bageq"/></svg></button>
        <button aria-label="Maximize"><svg><use href="#i-max"/></svg></button>
      </header>
      <p class="subject"><svg><use href="#i-open"/></svg>(ARK Indvendigt) Opening.1.30</p>
      <div class="tabs" role="tablist">
        <div class="tab-row pset">
          <button role="tab">Pset_OpeningElementCommon</button><button role="tab">Pset_ProductRequirements</button><button role="tab">Pset_QuantityTakeOff</button><button role="tab">Visibility</button>
        </div>
        <div class="tab-row more">
          <button role="tab">Dimensions</button><button role="tab">Electrical - Loads</button><button role="tab">Identity Data</button><button role="tab">Other</button><button role="tab">Phasing</button><button role="tab">Pset_ElementShading</button>
        </div>
        <div class="tab-row main">
          <button role="tab" aria-selected="true">Identification</button><button role="tab">Location</button><button role="tab">Quantities</button><button role="tab">Profile</button><button role="tab">Relations</button><button role="tab">Classification</button><button role="tab" class="dimmed">Hyperlinks</button><button role="tab" class="custom">Constraints</button>
        </div>
      </div>
      <div class="zebra sheet">
        <table class="props">
          <thead><tr><th>Property</th><th>Value</th></tr></thead>
          <tbody>
            <tr><td>Model</td><td>(ARK Indvendigt) CPHP_K01_F01_N02</td></tr>
            <tr><td>Discipline</td><td>Architectural</td></tr>
            <tr><td>Name</td><td>Basic Wall:Indv. betonelementvæg - 300 mm:97...</td></tr>
            <tr><td>Description</td><td></td></tr>
            <tr><td>Layer</td><td>Q-SPCQ-____-OTLN</td></tr>
            <tr><td>System</td><td></td></tr>
            <tr><td>Filled</td><td>False</td></tr>
            <tr><td>Geometry</td><td>Extrusion</td></tr>
            <tr><td>Application</td><td>Autodesk Revit 2020 (ENU)</td></tr>
            <tr><td>IFC Entity</td><td>IfcOpeningElement</td></tr>
            <tr><td>GUID</td><td>0Vy7Ix4Jf38BWnqB_S1fgb</td></tr>
            <tr><td>BATID</td><td></td></tr>
            <tr><td>Model Categories</td><td></td></tr>
          </tbody>
        </table>
        <div class="stripes odd"></div>
      </div>
    </section>
  </main>

  <footer class="status">
    <span>Show component properties by clicking.</span>
    <div class="status-right"><span>Role: SWDK_Kollisions- og konsistenskontrol</span><span>Selected: 6.579</span></div>
  </footer>
</div>
<div class="backdrop"></div>
</div>
</body>
</html>
```
FILE: styles.css
```css
* { box-sizing: border-box; }

body {
  margin: 0;
  font: 12px/16px Lato, "Open Sans", sans-serif;
  color: #000;
}

h1, h2, h3, p { margin: 0; font-weight: 400; }
button { border: 0; padding: 0; background: none; font: inherit; color: inherit; }
a { color: inherit; text-decoration: none; }
svg { width: 14px; height: 14px; flex: none; fill: none; stroke: currentColor; display: block; }
.sprite { position: absolute; width: 0; height: 0; }
svg.w16 { width: 16px; }
svg.caret { width: 12px; height: 6px; }

.window { display: flex; min-height: 100vh; }
.app {
  flex: 1;
  min-width: 0;
  display: flex;
  flex-direction: column;
  height: 100vh;
  min-height: 900px;
  background: linear-gradient(#f1f1f1 130px, #c9c9c9);
}
.backdrop {
  width: 3px;
  background: linear-gradient(#c8c8c8 40px, #fff 40px 129px, #1d2847 129px 203px, #fff 203px);
}

/* Title bar and menu */
.titlebar { display: flex; align-items: center; height: 29px; padding: 0 4px 0 2px; background: #fff; color: #999; font-family: "Open Sans", sans-serif; }
.titlebar h1 { margin-left: 5px; font-size: 14px; line-height: 20px; }
.app-badge {
  width: 20px; height: 20px; border-radius: 5px;
  background: #ffc60a; color: #fff;
  font-size: 16px; font-weight: 700; line-height: 19px; text-align: center;
}
.window-buttons { display: flex; margin-left: auto; }
.window-buttons button { width: 58px; display: grid; place-items: center; color: #888; }
.window-buttons svg { width: 12px; height: 12px; }

.menu {
  display: flex; align-items: center; gap: 27px;
  height: 60px; padding: 0 18px 0 28px;
  background: #2f374b; color: #718cad;
  font: 14px/20px "Open Sans", sans-serif; white-space: nowrap;
}
.menu a { position: relative; }
.menu .current { color: #ffc800; }
.menu .current::after {
  content: ""; position: absolute; left: 50%; bottom: -7px;
  width: 4px; height: 4px; border-radius: 50%; background: #ffc800;
}
.menu .add svg { width: 10px; height: 10px; }
.menu .views { margin-left: auto; }
.menu .brand { width: 24px; height: 24px; margin-left: -10px; color: #e6e8ee; }

/* Main toolbar */
.toolbar {
  display: flex; align-items: center;
  height: 41px; padding: 0 5px 0 1px;
  background: #f4f4f4; border-bottom: 1px solid #d6d6d6;
}
.tool { display: flex; align-items: center; justify-content: center; width: 38px; height: 34px; }
.tool > svg:first-child { width: 28px; height: 28px; }
.tool.off { color: #888; }
.tool.wide { width: auto; padding: 0 8px 0 5px; gap: 6px; }
.drop { width: 23px; height: 34px; display: grid; place-items: center; }
.sep { flex: none; width: 1px; background: #d0d0d0; }
.toolbar .sep { height: 33px; margin: 0 3px; }
.search {
  display: flex; align-items: center;
  width: 307px; height: 26px; margin-left: auto; padding: 0 8px 0 6px;
  border: 1px solid #d0d0d0; border-radius: 4px; background: #fff; color: #444;
}
.search input { flex: 1; min-width: 0; border: 0; padding: 0; outline: 0; background: none; font: inherit; }
.search input::placeholder { color: #777; }

/* Workspace */
.workspace {
  flex: 1; min-height: 0;
  display: grid; grid-template-columns: 523fr 807fr 533fr; gap: 14px;
  padding: 14px 15px 0 14px;
}
.left { display: grid; grid-template-rows: repeat(3, minmax(0, 1fr)); gap: 15px; min-width: 0; min-height: 0; }
.panel {
  display: flex; flex-direction: column;
  min-width: 0; min-height: 0; overflow: hidden;
  background: #f4f4f4; border: 1px solid #d8d8d8;
}
.panel-head { flex: none; display: flex; align-items: center; gap: 7px; height: 35px; padding: 0 10px 0 8px; }
.panel-head h2 { margin-right: auto; font: 13px/18px "Open Sans", sans-serif; white-space: nowrap; }
.panel-head button { display: flex; align-items: center; gap: 6px; white-space: nowrap; }
.panel-head button:last-child { margin-left: 2px; }
.panel-head .sep { height: 18px; }
.off { color: #8a8a8a; }
.panel-head .pressed { width: 22px; height: 22px; justify-content: center; border-radius: 4px; background: #dadada; border: 1px solid #cfcfcf; }

/* Tables */
table { width: 100%; border-collapse: collapse; table-layout: fixed; }
th { height: 27px; padding: 0; background: #fff; font-weight: 400; text-align: left; border-right: 2px solid #ececec; border-bottom: 1px solid #e6e6e6; }
td { height: 22px; padding: 0 1px; border-right: 1px solid #b8b8b8; white-space: nowrap; overflow: hidden; }
th > svg, td > svg { margin: 0 auto; }
tbody tr { background: #fff; }
tbody tr:nth-child(even) { background: #dedede; }
tbody tr.selected { background: #0078d7; color: #fff; }
tbody tr.selected svg { color: #000; }
.c21 { width: 21px; }
.c120 { width: 120px; }
.c144 { width: 144px; }
.lead { padding-left: 5px; }

.zebra { flex: 1; min-height: 0; display: flex; flex-direction: column; overflow: hidden; background: #fff; }
.framed { border: 1px solid #828790; }
.stripes {
  flex: 1;
  background:
    repeating-linear-gradient(#fff 0 22px, transparent 22px 44px),
    linear-gradient(#dedede, #fff 140px);
}
.stripes.odd {
  background:
    repeating-linear-gradient(transparent 0 22px, #fff 22px 44px),
    linear-gradient(#dedede, #fff 370px);
}

.node { display: flex; align-items: center; gap: 5px; }
.node .tw { width: 8px; height: 8px; margin-right: 3px; }
.node .bk { width: 12px; }
.l0 { padding-left: 4px; }
.l1 { padding-left: 23px; }
.l2 { padding-left: 42px; }
.l3 { padding-left: 61px; }
.l4 { padding-left: 80px; }
.l5 { padding-left: 99px; }

.sev { display: flex; gap: 9px; padding-left: 5px; }
.sev.head { gap: 10px; }
svg.red, tbody tr.selected svg.red { color: #d80000; }
svg.orange, tbody tr.selected svg.orange { color: #ff7a00; }
svg.yellow, tbody tr.selected svg.yellow { color: #ffd000; }
.s-red { --sev: #e00000; }
.s-orange { --sev: #ff7a00; }

.scroller { flex: 1; min-height: 0; display: flex; overflow: hidden; }
.scroller table { flex: 1; align-self: flex-start; }
.vbar { display: flex; flex-direction: column; align-items: center; width: 17px; background: #f0f0f0; color: #555; }
.vbar svg, .hbar svg { width: 8px; height: 8px; }
.vbar svg { margin: 5px 0 4px; }
.vbar .end { margin-top: auto; }
.vbar.below-head { margin-top: 27px; }
.thumb { background: #cdcdcd; width: 15px; }
.tree-thumb { height: 86px; }

.summary th { height: 22px; }
.summary td { text-align: center; }
.summary td:first-child { text-align: left; }

.unseen td { font-weight: 600; }
.dim svg, tbody tr.selected .dim svg { color: #a0a0a0; }
.results td:last-child { border-right-color: #d0d0d0; }

/* Parameters */
.middle { display: flex; flex-direction: column; min-width: 0; min-height: 0; }
.params { height: 450px; flex: none; }
.param-scroll {
  flex: 1; min-height: 0; margin: 2px 4px 4px 3px;
  display: grid; grid-template: minmax(0, 1fr) 16px / minmax(0, 1fr) 17px;
}
.param-view { overflow: hidden; padding: 5px 0 0 7px; border-bottom: 1px solid #fff; border-right: 1px solid #fff; }
.param-thumb { height: 314px; }
.hbar { display: flex; align-items: center; background: #f0f0f0; color: #555; padding: 0 4px; }
.hbar svg { margin-right: 5px; }
.hbar .thumb { flex: 0 1 722px; height: 15px; }
.hbar .end { margin: 0 0 0 auto; }

.group { margin: 0; padding: 0; min-width: 0; border: 1px solid #9c9c9c; }
.group legend { margin-left: 4px; padding: 0 2px; }
.components { display: flex; width: 796px; height: 200px; }
.component { width: 395px; padding: 0 10px 0 8px; margin-top: 2px; }
.component + .component { width: 399px; border-left: 1px solid #9c9c9c; padding-left: 11px; }
.component-head { display: flex; align-items: center; gap: 8px; height: 33px; padding-right: 6px; }
.component-head h3 { font-size: 12px; margin-right: auto; padding-bottom: 4px; }
.component-head .sep { height: 16px; margin: 0 -2px; }
.short { height: 139px; }
.filter th { height: 28px; padding: 3px 0 0 5px; }
.filter td { padding-left: 1px; }
.with-icon { display: flex; align-items: center; gap: 5px; padding-left: 1px; }

.pair { display: flex; gap: 16px; width: 830px; margin-top: 7px; }
.pair > .group { width: 399px; height: 240px; }
.split { display: flex; justify-content: space-between; padding-right: 8px; height: 91px; }
.checks { display: flex; flex-direction: column; gap: 10px; padding: 10px 0 0 10px; }
.checks.loose { gap: 12px; }
.checks label { display: flex; align-items: center; gap: 4px; }
input[type="checkbox"] {
  appearance: none; display: grid; place-items: center;
  width: 13px; height: 13px; margin: 0;
  border: 1px solid #333; background: #fff;
}
input[type="checkbox"]:checked::before {
  content: ""; width: 5px; height: 9px; margin-bottom: 2px;
  border: solid #333; border-width: 0 1px 1px 0; transform: rotate(40deg);
}
.plain { width: 87px; height: 24px; margin-top: 8px; border: 1px solid #adadad; background: #e1e1e1; }
.tolerances { margin: 0 10px 0 15px; height: 120px; }
.tolerances label { display: flex; justify-content: space-between; margin: 0 7px 5px 8px; line-height: 18px; }
.tolerances legend + label { margin-top: 7px; }
.tolerances input { width: 228px; height: 22px; padding: 2px; border: 1px solid #abadb3; background: #fff; font: inherit; }

/* 3D view */
.view3d { flex: 1; min-height: 0; display: flex; flex-direction: column; margin-top: 14px; }
.view3d .panel-head { height: 34px; }
.scene { flex: 1; width: 100%; height: auto; min-height: 0; stroke: none; overflow: hidden; }
.edges path { vector-effect: non-scaling-stroke; }

/* Info */
.subject { display: flex; align-items: center; gap: 4px; height: 28px; padding-left: 6px; }
.tabs { padding: 5px 5px 0 2px; }
.tab-row { display: flex; height: 18px; border: 1px solid #dcdcdc; border-bottom: 0; background: #f0f0f0; }
.tab-row button { flex: 1 1 auto; border-right: 1px solid #d8d8d8; white-space: nowrap; overflow: hidden; line-height: 22px; color: #7684b0; }
.tab-row button:last-child { border-right: 0; }
.tab-row.main { height: 21px; }
.tab-row.main button { color: #000; }
.tab-row.main .dimmed { color: #888; }
.tab-row.main .custom { color: #7684b0; }
.tab-row.main [aria-selected="true"] { margin: -3px 0 0 -2px; height: 24px; background: #fff; }
.sheet { margin: 0 3px 3px 1px; border: 1px solid #dcdcdc; }
.props th { height: 30px; padding: 4px 0 0 5px; }
.props td { padding-left: 1px; }

/* Status bar */
.status { display: flex; align-items: center; height: 26px; padding: 8px 0 0 21px; white-space: nowrap; }
.status-right { display: flex; gap: 48px; margin-left: auto; width: 535px; }
```
